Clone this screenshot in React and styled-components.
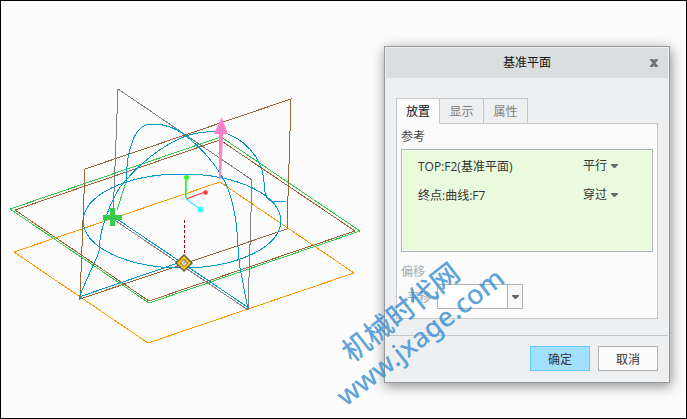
import { useState } from 'react';
import styled, { createGlobalStyle } from 'styled-components';

const TABS = ['放置', '显示', '属性'];

const REFERENCES = [
  { id: 'top', name: 'TOP:F2(基准平面)', type: '平行' },
  { id: 'curve', name: '终点:曲线:F7', type: '穿过' },
];

const CONSTRAINTS = ['平行', '穿过', '偏移', '法向'];

const Arrow = () => (
  <StyledArrow viewBox="0 0 7 4" width="7" height="4" aria-hidden="true">
    <path d="M0 0h7v1L4 4H3L0 1z" fill="#666" />
  </StyledArrow>
);

const Model = () => (
  <StyledModel viewBox="0 0 686 418" width="686" height="418" aria-hidden="true">
    <g fill="none" strokeWidth="1" shapeRendering="crispEdges">
      <path d="M14 252L220 182L354 273L148 343Z" stroke="#ff9900" />
      <path d="M10 209L221 137L360 231L149 303Z" stroke="#33cc4d" />
      <path d="M15 210L220 140L355 231L149 301Z" stroke="#996633" />
      <path d="M85 169L291 99L287 229L80 299Z" stroke="#996633" />
      <path d="M118 89L252 180L248 310L113 219Z" stroke="#808080" />
      <path d="M117 210L126 182" stroke="#33cc4d" />
      <g stroke="#0099cc">
        <ellipse cx="182" cy="221" rx="99" ry="47" />
        <path d="M79 297L95 261C99 253 100 249 100 240C101 231 104 222 107 214C112 200 118 188 126 180C145 158 175 136 198 133C210 131 219 131 228 134C241 139 250 148 256 157C262 167 263 173 264 182C265 189 264 195 268 199C271 203 276 201 286 201" />
        <path d="M126 182C127 167 127 155 131 146C135 131 143 124 152 124C166 124 180 130 191 140C204 151 216 166 223 178C230 191 234 208 236 222C238 238 238 256 240 268C243 284 246 299 248 309" />
        <path d="M114 217L249 308" />
        <path d="M79 297L184 261" />
        <path d="M79 295v3h3" />
      </g>
      <path d="M184.500 220V254" stroke="#990000" strokeDasharray="3 2" />
    </g>
    <g fill="none" strokeWidth="1">
      <path d="M185.500 198V180" stroke="#33e633" />
      <path d="M186.500 198V180" stroke="#66ff66" />
      <path d="M186 199L205 192" stroke="#ff3838" strokeWidth="1.300" />
      <path d="M186 199L200 209" stroke="#33eeff" strokeWidth="1.200" />
    </g>
    <circle cx="186.500" cy="177.500" r="2.500" fill="#26ff26" />
    <circle cx="205.500" cy="192.500" r="2.300" fill="#ff3838" />
    <circle cx="200.500" cy="209.500" r="3" fill="#33ffff" />
    <path d="M221.500 117L228 134H223L221 179H219V134H214Z" fill="#ff80cc" />
    <path d="M110 208h5v7h7v5h-7v6h-5v-6h-7v-5h7z" fill="#33cc4d" />
    <path d="M184 254L193 263L184 272L175 263Z" fill="#5c5548" />
    <path d="M184 256L191 263L184 270L177 263Z" fill="#ffc80a" />
    <path d="M184 259L188 263L184 267L180 263Z" fill="#5c5548" />
    <path d="M184 260L187 263L184 266L181 263Z" fill="#fff" />
    <path d="M183 263h2v-2" fill="none" stroke="#777" />
  </StyledModel>
);

const DatumPlaneDialog = () => {
  const [tab, setTab] = useState(TABS[0]);

  return (
    <StyledDialog role="dialog" aria-labelledby="dialog-title">
      <StyledHeader>
        <StyledTitle id="dialog-title">基准平面</StyledTitle>
        <StyledCloseBtn type="button" aria-label="关闭">
          <svg viewBox="0 0 8 8" width="8" height="8">
            <path
              d="M0 0h3l1 1.500L5 0h3v1L5.500 4L8 7v1H5L4 6.500L3 8H0V7L2.500 4L0 1z"
              fill="#707374"
            />
          </svg>
        </StyledCloseBtn>
      </StyledHeader>

      <StyledBody>
        <StyledTabs role="tablist">
          {TABS.map((name) => (
            <StyledTab
              key={name}
              type="button"
              role="tab"
              aria-selected={tab === name}
              $active={tab === name}
              onClick={() => setTab(name)}
            >
              {name}
            </StyledTab>
          ))}
        </StyledTabs>

        <StyledPanel role="tabpanel">
          <StyledSubTitle id="references">参考</StyledSubTitle>
          <StyledList aria-labelledby="references">
            {REFERENCES.map(({ id, name, type }) => (
              <StyledRow key={id}>
                <label htmlFor={id}>{name}</label>
                <StyledType>
                  <StyledSelect id={id} defaultValue={type}>
                    {CONSTRAINTS.map((item) => (
                      <option key={item}>{item}</option>
                    ))}
                  </StyledSelect>
                  <Arrow />
                </StyledType>
              </StyledRow>
            ))}
          </StyledList>

          <StyledOffsetTitle>偏移</StyledOffsetTitle>
          <StyledOffset>
            <label htmlFor="translation">平移</label>
            <StyledCombo>
              <StyledInput id="translation" type="text" />
              <StyledComboBtn type="button" aria-label="平移值">
                <Arrow />
              </StyledComboBtn>
            </StyledCombo>
          </StyledOffset>
        </StyledPanel>
      </StyledBody>

      <StyledFooter>
        <StyledButton type="button" $primary>
          确定
        </StyledButton>
        <StyledButton type="button">取消</StyledButton>
      </StyledFooter>
    </StyledDialog>
  );
};

const App = () => (
  <>
    <GlobalStyle />
    <StyledWorkspace>
      <Model />
      <DatumPlaneDialog />
      <StyledWatermark>
        <StyledSiteName>机械时代网</StyledSiteName>
        <span>www.jxage.com</span>
      </StyledWatermark>
    </StyledWorkspace>
  </>
);

export default App;

const GlobalStyle = createGlobalStyle`
  * {
    box-sizing: border-box;
  }

  body {
    margin: 0;
    background: #fcfcfc;
  }

  body, button, input, select {
    font-family: 'Open Sans', 'Noto Sans CJK SC', sans-serif;
    font-size: 12px;
    color: #333;
  }
`;

const StyledWorkspace = styled.main`
  position: relative;
  min-height: 100vh;
  border: 1px solid #000;
  overflow: hidden;
`;

const StyledModel = styled.svg`
  display: block;
  margin: -1px;
`;

/* floats over the model view */
const StyledDialog = styled.section`
  position: absolute;
  top: 45px;
  right: 16px;
  width: 286px;
  padding: 1px;
  border: 1px solid #969899;
  background: #eeeff1;
  box-shadow: 1px 3px 12px rgba(0, 0, 0, 0.45);
`;

const StyledHeader = styled.header`
  display: grid;
  grid-template-columns: 28px 1fr 28px;
  align-items: center;
  height: 30px;
  background: #d9dddd;
`;

const StyledTitle = styled.h1`
  grid-column: 2;
  margin: 0;
  font-size: 12px;
  font-weight: 400;
  line-height: 18px;
  text-align: center;
  color: #111;
`;

const StyledCloseBtn = styled.button`
  display: flex;
  align-items: center;
  justify-content: center;
  height: 28px;
  padding: 0;
  border: none;
  background: transparent;
  cursor: pointer;
`;

const StyledBody = styled.div`
  padding: 20px 10px 16px;
`;

const StyledTabs = styled.div`
  display: flex;
`;

const StyledTab = styled.button`
  position: relative;
  z-index: ${({ $active }) => ($active ? 1 : 0)};
  width: 44px;
  height: 26px;
  margin-bottom: -1px;
  padding: 0;
  border: 1px solid #c5c7c9;
  border-left-width: ${({ $active }) => ($active ? '1px' : '0')};
  border-bottom-color: ${({ $active }) => ($active ? '#fbfbfb' : '#c5c7c9')};
  background: ${({ $active }) => ($active ? '#fbfbfb' : '#eeeff1')};
  color: ${({ $active }) => ($active ? '#111' : '#808080')};
  cursor: pointer;
`;

const StyledPanel = styled.div`
  padding: 0 4px 9px;
  border: 1px solid #c5c7c9;
  background: #fbfbfb;
`;

const StyledSubTitle = styled.h2`
  margin: 0;
  font-size: 12px;
  font-weight: 400;
  line-height: 25px;
  color: #444;
`;

const StyledList = styled.ul`
  min-height: 103px;
  margin: 0 0 8px;
  padding: 1px 0 0;
  border: 1px solid #aeb0b2;
  background: #eafbdd;
  box-shadow: inset 0 0 0 1px #f8fff2;
  list-style: none;
`;

const StyledRow = styled.li`
  display: flex;
  align-items: center;
  justify-content: space-between;
  height: 29px;
  padding: 0 33px 0 16px;
`;

const StyledType = styled.span`
  display: flex;
  align-items: center;
  width: 36px;
`;

const StyledSelect = styled.select`
  width: 28px;
  padding: 0;
  border: none;
  background: transparent;
  appearance: none;
  cursor: pointer;
`;

const StyledArrow = styled.svg`
  flex: none;
`;

const StyledOffsetTitle = styled(StyledSubTitle)`
  line-height: 24px;
  color: #aaa;
`;

const StyledOffset = styled.div`
  display: flex;
  align-items: center;
  gap: 6px;
  padding-left: 6px;
  color: #aaa;
`;

const StyledCombo = styled.div`
  display: flex;
  width: 86px;
  height: 25px;
  border: 1px solid #b0b2b4;
`;

const StyledInput = styled.input`
  flex: 1;
  min-width: 0;
  padding: 0 4px;
  border: none;
  background: #fff;
`;

const StyledComboBtn = styled.button`
  display: flex;
  align-items: center;
  justify-content: center;
  width: 15px;
  padding: 0;
  border: none;
  border-left: 1px solid #b0b2b4;
  background: #f7f7f7;
  cursor: pointer;
`;

const StyledFooter = styled.footer`
  display: flex;
  justify-content: flex-end;
  gap: 8px;
  padding: 10px;
  border-top: 1px solid #c5c7c9;
`;

const StyledButton = styled.button`
  width: 60px;
  height: 25px;
  padding: 0;
  border: 1px solid ${({ $primary }) => ($primary ? '#66ccff' : '#b0b2b4')};
  background: ${({ $primary }) => ($primary ? '#a1e0ff' : '#fbfbfb')};
  cursor: pointer;
`;

const StyledWatermark = styled.div`
  position: absolute;
  right: 171px;
  bottom: 62px;
  display: flex;
  flex-direction: column;
  align-items: center;
  width: 210px;
  font-family: 'Noto Sans', 'Noto Sans CJK SC', sans-serif;
  font-size: 27px;
  font-weight: 500;
  line-height: 32px;
  color: rgba(55, 140, 205, 0.8);
  transform: rotate(-38deg);
  pointer-events: none;
`;

const StyledSiteName = styled.span`
  font-size: 28px;
`;
